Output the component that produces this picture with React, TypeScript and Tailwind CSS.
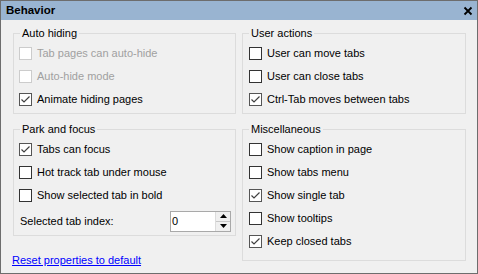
import { FC, ReactNode } from "react";

const Check: FC<{ label: string; checked?: boolean; disabled?: boolean }> = ({
  label,
  checked,
  disabled,
}) => {
  return (
    <div className="flex items-center h-[23px]">
      <div
        className={
          disabled
            ? "w-[13px] h-[13px] border border-[#cccccc] bg-white flex items-center justify-center"
            : checked
              ? "w-[13px] h-[13px] border border-[#555555] bg-white flex items-center justify-center"
              : "w-[13px] h-[13px] border border-[#333333] bg-white flex items-center justify-center"
        }
      >
        {checked && (
          <svg width="11" height="11" viewBox="0 0 11 11">
            <path d="M1.5 5.5 L4 8 L9.5 2.5" fill="none" stroke="#404040" strokeWidth="1.2" />
          </svg>
        )}
      </div>
      <span className={disabled ? "ml-[5px] text-[#a0a0a0]" : "ml-[5px] text-black"}>{label}</span>
    </div>
  );
};

// winforms style group box, caption sits on the top edge
const GroupBox: FC<{ title: string; className?: string; children: ReactNode }> = ({
  title,
  className,
  children,
}) => {
  return (
    <div className={"relative border border-[#dcdcdc] " + (className ?? "")}>
      <span className="absolute left-[6px] -top-[8px] px-[2px] bg-[#f0f0f0] leading-[14px] text-black">
        {title}
      </span>
      {children}
    </div>
  );
};

export default function App() {
  return (
    <div
      className="w-[478px] h-[274px] border border-[#6d6d6d] bg-[#f0f0f0] flex flex-col text-[11px] overflow-hidden"
      style={{ fontFamily: '"Liberation Sans", Arial, sans-serif' }}
    >
      <div className="h-[19px] shrink-0 bg-[#99b4d1] flex items-center justify-between pl-[5px] pr-[3px]">
        <span className="font-bold text-[11.5px] text-black">Behavior</span>
        <svg width="10" height="10" viewBox="0 0 10 10" className="mr-[1px]">
          <path d="M1.5 1.5 L8.5 8.5 M8.5 1.5 L1.5 8.5" stroke="#000" strokeWidth="1.8" />
        </svg>
      </div>

      <div className="flex gap-[6px] pl-[12px] pr-[9px] pt-[13px]">
        <div className="flex flex-col w-[223px]">
          <GroupBox title="Auto hiding" className="pt-[8px] pb-[2px] pl-[5px]">
            <Check label="Tab pages can auto-hide" disabled />
            <Check label="Auto-hide mode" disabled />
            <Check label="Animate hiding pages" checked />
          </GroupBox>
          <GroupBox title="Park and focus" className="mt-[15px] pt-[8px] pb-[2px] pl-[5px]">
            <Check label="Tabs can focus" checked />
            <Check label="Hot track tab under mouse" />
            <Check label="Show selected tab in bold" />
            <div className="flex items-center justify-between h-[24px] mt-[2px] pr-[4px]">
              <span className="ml-[1px] text-black">Selected tab index:</span>
              <div className="w-[61px] h-[21px] border border-[#a9a9a9] bg-white flex">
                <span className="flex-1 pl-[1px] leading-[19px] text-black">0</span>
                <div className="w-[15px] flex flex-col border-l border-[#dcdcdc] bg-[#f0f0f0]">
                  <div className="flex-1 flex items-center justify-center border-b border-[#c8c8c8]">
                    <svg width="7" height="4" viewBox="0 0 7 4">
                      <path d="M3.5 0 L7 4 L0 4 Z" fill="#000" />
                    </svg>
                  </div>
                  <div className="flex-1 flex items-center justify-center">
                    <svg width="7" height="4" viewBox="0 0 7 4">
                      <path d="M0 0 L7 0 L3.5 4 Z" fill="#000" />
                    </svg>
                  </div>
                </div>
              </div>
            </div>
          </GroupBox>
          <a className="mt-[17px] -ml-[1px] text-[#0000ff] underline leading-[14px]" href="#">
            Reset properties to default
          </a>
        </div>

        <div className="flex flex-col w-[224px]">
          <GroupBox title="User actions" className="pt-[8px] pb-[2px] pl-[6px]">
            <Check label="User can move tabs" />
            <Check label="User can close tabs" />
            <Check label="Ctrl-Tab moves between tabs" checked />
          </GroupBox>
          <GroupBox title="Miscellaneous" className="mt-[15px] pt-[8px] pb-[7px] pl-[6px]">
            <Check label="Show caption in page" />
            <Check label="Show tabs menu" />
            <Check label="Show single tab" checked />
            <Check label="Show tooltips" />
            <Check label="Keep closed tabs" checked />
          </GroupBox>
        </div>
      </div>
    </div>
  );
}
